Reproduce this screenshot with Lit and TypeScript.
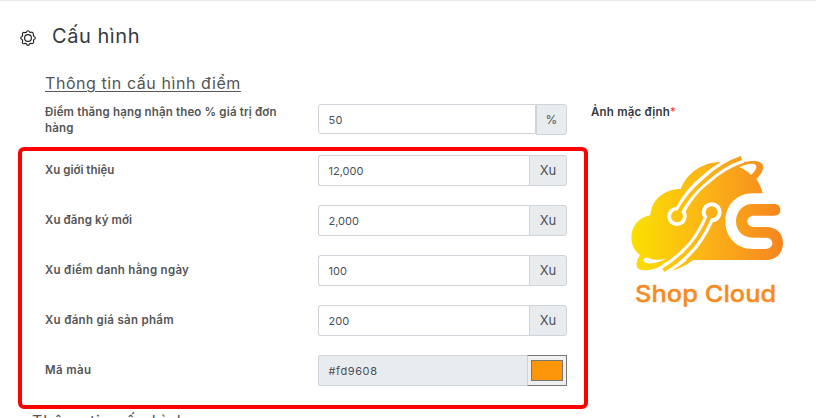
import { LitElement, html, css, svg } from "lit";
import { customElement, property } from "lit/decorators.js";

@customElement("shop-logo")
class ShopLogo extends LitElement {
  static styles = css`
    :host { display: block; width: 175px; height: 170px; }
    svg { display: block; }
    .word { font: 500 70px "Inter", sans-serif; fill: #f98a22; stroke: #f98a22; stroke-width: 1px; }
  `;
  render() {
    return html`<svg width="175" height="170" viewBox="0 0 525 510" fill="none" role="img" aria-label="Shop Cloud">
      <defs>
        <linearGradient id="g" gradientUnits="userSpaceOnUse" x1="34" y1="0" x2="490" y2="0">
          <stop offset="0" stop-color="#fbe000" />
          <stop offset="0.5" stop-color="#fbb317" />
          <stop offset="1" stop-color="#f68420" />
        </linearGradient>
      </defs>
      ${svg`
        <path fill="url(#g)" d="M91 345C58 337 34 311 34 278C34 242 59 216 91 211C95 164 132 132 182 132C202 82 248 51 305 51C368 51 416 90 428 145H397C350 145 316 181 316 229C316 277 350 312 397 312H436C448 312 457 305 457 295C457 284 449 278 437 278H397C368 278 348 257 348 229C348 200 369 177 397 177H463C474 177 481 184 481 195C481 206 474 212 463 212H402C390 212 382 219 382 229C382 239 390 246 402 246H438C470 246 489 266 489 294C489 323 470 345 438 345Z"/>
        <path fill="url(#g)" d="M330 66C360 52 390 46 410 49C425 51 431 60 429 70C427 82 419 94 406 104L389 90C402 80 410 69 406 61C400 52 375 60 350 70Z"/>
        <path fill="#fff" d="M358 67C381 56 402 52 408 61C412 69 404 81 393 90C384 80 372 72 358 67Z"/>
        <path stroke="#fff" stroke-width="31" d="M178 202C197 163 224 130 254 106C287 76 322 53 368 38"/>
        <circle cx="171" cy="214" r="29" fill="#fff"/>
        <circle cx="171" cy="214" r="18" fill="url(#g)"/>
        <path stroke="url(#g)" stroke-width="12" d="M174 206C195 165 224 132 254 107C287 77 322 53 364 39"/>
        <path fill="url(#g)" d="M62 328C48 348 45 365 57 373C80 382 118 369 148 347L140 336C112 355 76 361 71 346C70 341 75 337 82 336Z"/>
        <path fill="#fff" d="M71 348C70 340 77 336 85 339C106 348 128 345 143 338C121 352 78 363 71 348Z"/>
        <path fill="url(#g)" d="M148 379C174 367 198 351 216 330L226 340C204 358 178 373 148 379Z"/>
        <path stroke="#fff" stroke-width="31" d="M269 216C251 257 228 297 196 325C176 345 155 361 133 373"/>
        <circle cx="275" cy="202" r="30" fill="#fff"/>
        <circle cx="275" cy="202" r="18" fill="url(#g)"/>
        <path stroke="url(#g)" stroke-width="12" d="M271 211C252 256 228 296 196 325C176 345 155 361 130 376"/>
        <text class="word" x="45" y="472" textLength="424" lengthAdjust="spacingAndGlyphs">Shop Cloud</text>
      `}
    </svg>`;
  }
}

@customElement("config-row")
class ConfigRow extends LitElement {
  @property() label = "";
  @property() value = "";
  @property() unit = "";
  @property() color = "";
  @property({ type: Number }) tracking = 0;
  static styles = css`
    :host { display: grid; grid-template-columns: 273px 249px; height: 50px; }
    .label { font-size: 11.5px; line-height: 16px; font-weight: 600; color: #555; padding: 7px 30px 0 0; }
    .group { display: flex; height: 31px; }
    .input { box-sizing: border-box; flex: 1; border: 1px solid #ced4da; border-right: 0; border-radius: 3px 0 0 3px;
      padding-left: 9.5px; font-size: 11px; line-height: 30px; color: #495057; }
    .unit { box-sizing: border-box; width: 38px; border: 1px solid #ced4da; border-radius: 0 3px 3px 0; background: #e9ecef;
      text-align: center; font-size: 13px; line-height: 29px; color: #495057; }
    .disabled { background: #e9ecef; letter-spacing: 0.6px; }
    .swatch { box-sizing: border-box; width: 40px; border: 1px solid #767676; border-left-color: #ced4da; background: #efefef; padding: 4px 3px; }
    .fill { box-sizing: border-box; height: 21px; border: 1px solid #777; }
    :host([unit="%"]) { height: 51px; }
    :host([unit="%"]) .label { padding-top: 0; }
    :host([unit="%"]) .input { height: 30px; border-right: 1px solid #ced4da; letter-spacing: 0.4px; }
    :host([unit="%"]) .unit { width: 31px; font-size: 12px; }
  `;
  render() {
    return html`<div class="label" style="letter-spacing:${this.tracking}px">${this.label}</div>
      <div class="group">
        <div class="input ${this.color ? "disabled" : ""}">${this.value}</div>
        ${this.color
          ? html`<div class="swatch"><div class="fill" style="background:${this.color}"></div></div>`
          : html`<div class="unit">${this.unit}</div>`}
      </div>`;
  }
}

@customElement("app-root")
class AppRoot extends LitElement {
  static styles = css`
    :host { display: block; position: relative; box-sizing: border-box; width: 816px; height: 418px; overflow: hidden;
      background: #fff; border-top: 1px solid #e9e9e9; font-family: "Inter", "Noto Sans", sans-serif; }
    .title { display: flex; align-items: center; gap: 16px; padding: 20px 0 0 20px; height: 30px; color: #343a40; }
    .title h1 { margin: 0; font-size: 20px; font-weight: 400; letter-spacing: 0.55px; }
    .gear { margin-top: 3px; }
    .body { display: grid; grid-template-columns: 522px 1fr; column-gap: 24px; padding-left: 45px; padding-top: 21px; }
    h2 { margin: 0; height: 32px; line-height: 22px; font-size: 16px; font-weight: 400; color: #555; letter-spacing: 0.57px; }
    .line { text-decoration: underline; text-decoration-thickness: 1px; text-underline-offset: 2px; }
    .side { padding-top: 33px; font-size: 11.5px; line-height: 14px; font-weight: 600; color: #343a40; letter-spacing: 0.2px; }
    .req { color: #f33; font-weight: 400; }
    shop-logo { margin: 26px 0 0 29px; }
    h2.next { margin: 5px 0 0 32px; letter-spacing: 0.8px; }
    .mark { position: absolute; left: 18px; top: 146px; width: 570px; height: 262px; box-sizing: border-box; border: 4px solid #f00; border-radius: 6px; }
  `;
  render() {
    const rows: [string, string, number][] = [
      ["Xu giới thiệu", "12,000", 0],
      ["Xu đăng ký mới", "2,000", 0.1],
      ["Xu điểm danh hằng ngày", "100", 0.29],
      ["Xu đánh giá sản phẩm", "200", 0.31],
    ];
    return html`
      <div class="title">
        <svg class="gear" width="16" height="16" viewBox="0 0 16 16" fill="none" stroke="#222" stroke-width="1.15" stroke-linejoin="round">
          <path d="M6.5 2.1Q6.8.7 8 .7T9.5 2.1L10.3 2.5Q11.8 1.7 12.7 2.6T13.3 5.1L13.9 6.5Q15.3 6.8 15.3 8T13.9 9.5L13.4 10.9Q14.2 12 13.4 13T10.9 13.3L9.5 13.9Q9.2 15.3 8 15.3T6.5 13.9L5.1 13.3Q3.7 14.2 2.8 13.3T2.7 10.9L2.1 9.5Q.7 9.2.7 8T2.1 6.5L2.7 5.1Q1.9 3.7 2.8 2.8T5.1 2.7Z"/>
          <circle cx="8" cy="8" r="3.4"/>
        </svg>
        <h1>Cấu hình</h1>
      </div>
      <div class="body">
        <div>
          <h2><span class="line">Thông tin cấu hình điểm</span></h2>
          <config-row unit="%" value="50" label="Điểm thăng hạng nhận theo % giá trị đơn hàng" .tracking=${0.16}></config-row>
          ${rows.map(([l, v, t]) => html`<config-row unit="Xu" .label=${l} .value=${v} .tracking=${t}></config-row>`)}
          <config-row label="Mã màu" value="#fd9608" color="#fd9608" .tracking=${0.4}></config-row>
        </div>
        <div class="side">
          <div>Ảnh mặc định<span class="req">*</span></div>
          <shop-logo></shop-logo>
        </div>
      </div>
      <h2 class="next">Thông tin cấu hình</h2>
      <div class="mark"></div>
    `;
  }
}
